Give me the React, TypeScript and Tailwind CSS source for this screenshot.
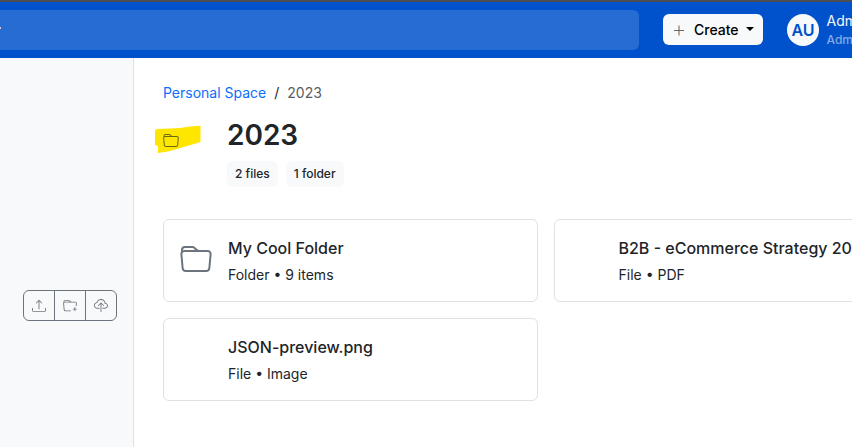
import type { ReactNode } from "react";
import { BsCloudUpload, BsFolder, BsFolderPlus, BsUpload } from "react-icons/bs";

function ItemCard({ title, meta, icon }: { title: string; meta: string; icon?: ReactNode }) {
  return (
    <div className="flex h-[83px] min-w-0 items-center rounded-md border border-[#dee2e6] bg-white pl-4">
      <div className="w-12 shrink-0 pb-0.5 text-[#6c757d]">{icon}</div>
      <div className="whitespace-nowrap text-[#212529]">
        <div className="text-[16px] leading-6 font-medium">{title}</div>
        <div className="mt-1 mb-px text-[14px] leading-[21px]">{meta}</div>
      </div>
    </div>
  );
}

function Chip({ children }: { children: ReactNode }) {
  return (
    <span className="flex h-[26px] items-center rounded-md bg-[#f8f9fa] px-2 text-[12px] font-medium text-[#212529]">
      {children}
    </span>
  );
}

function PlusIcon() {
  return (
    <svg className="size-4" viewBox="0 0 16 16" fill="none">
      <path d="M3 8.5h10" stroke="#666a6f" />
      <path d="M8 3.5v10" stroke="#8a5428" />
    </svg>
  );
}

export default function App() {
  return (
    <div className="flex h-[447px] w-[852px] flex-col overflow-hidden bg-white font-['Inter',sans-serif]">
      <header className="flex h-[58px] shrink-0 items-start border-t-2 border-[#4b4e53] bg-[#0052cc] pt-2">
        <div className="h-10 w-[639px] shrink-0 overflow-hidden rounded-r-md bg-[#266cd3] pt-[17px]">
          <div className="h-0.5 w-px bg-[#e0c4dc]" />
        </div>
        <button className="mt-1 ml-6 flex h-[31px] w-[100px] shrink-0 items-center rounded-md bg-[#f8f9fa] pl-2 text-[14px] font-medium text-black">
          <PlusIcon />
          <span className="ml-[7px]">Create</span>
          <span className="-mt-0.5 ml-[7px] border-x-4 border-t-4 border-x-transparent border-t-black" />
        </button>
        <div className="mt-1 ml-6 flex size-8 shrink-0 items-center justify-center rounded-full bg-[#f8f9fa] text-[16px] font-semibold text-[#0052cc]">
          AU
        </div>
        <div className="ml-[7.5px] whitespace-nowrap text-[#f8f9fa]">
          <div className="text-[14px] leading-[21px]">Admin User</div>
          <div className="text-[12px] leading-[18px] font-medium text-[#84a9e4]">Administrator</div>
        </div>
      </header>
      <div className="flex flex-1">
        <aside className="w-[134px] shrink-0 border-r border-[#dee2e6] bg-[#f8f9fa] pt-[232px] pl-[23px]">
          <div className="flex h-[31px] w-[94px] divide-x divide-[#6c757d] rounded-md border border-[#6c757d] text-[#6c757d]">
            <div className="flex flex-1 items-center justify-center"><BsUpload className="size-3.5" /></div>
            <div className="flex flex-1 items-center justify-center"><BsFolderPlus className="size-3.5" /></div>
            <div className="flex flex-1 items-center justify-center"><BsCloudUpload className="size-3.5" /></div>
          </div>
        </aside>
        <main className="min-w-0 flex-1 pl-[29px]">
          <nav className="flex gap-2 pt-6 text-[14px] leading-[21px]">
            <span className="text-[#0d6efd]">Personal Space</span>
            <span className="text-[#212529]">/</span>
            <span className="text-[#595c5f]">2023</span>
          </nav>
          <div className="flex h-[116px] pt-px">
            <div className="relative w-16 shrink-0">
              <svg className="absolute top-[21px] -left-2 h-[30px] w-[46px]" viewBox="0 0 46 30">
                <path d="M0 5.5 2 4 15 3.5 25 3 35 1.5 45.5.7V17L34 20.5 22 24l-9 2.5-10 1.5V21L0 20Z" fill="#ffe600" />
              </svg>
              <BsFolder className="relative mt-[29px] size-4 text-[#676a12]" />
            </div>
            <div>
              <h1 className="mt-[14px] text-[28px] leading-[34px] font-semibold text-[#212529]">2023</h1>
              <div className="mt-[9px] flex gap-2">
                <Chip>2 files</Chip>
                <Chip>1 folder</Chip>
              </div>
            </div>
          </div>
          <div className="grid w-[765px] grid-cols-2 gap-4">
            <ItemCard title="My Cool Folder" meta="Folder • 9 items" icon={<BsFolder className="size-8" />} />
            <ItemCard title="B2B - eCommerce Strategy 2023" meta="File • PDF" />
            <ItemCard title="JSON-preview.png" meta="File • Image" />
          </div>
        </main>
      </div>
    </div>
  );
}
